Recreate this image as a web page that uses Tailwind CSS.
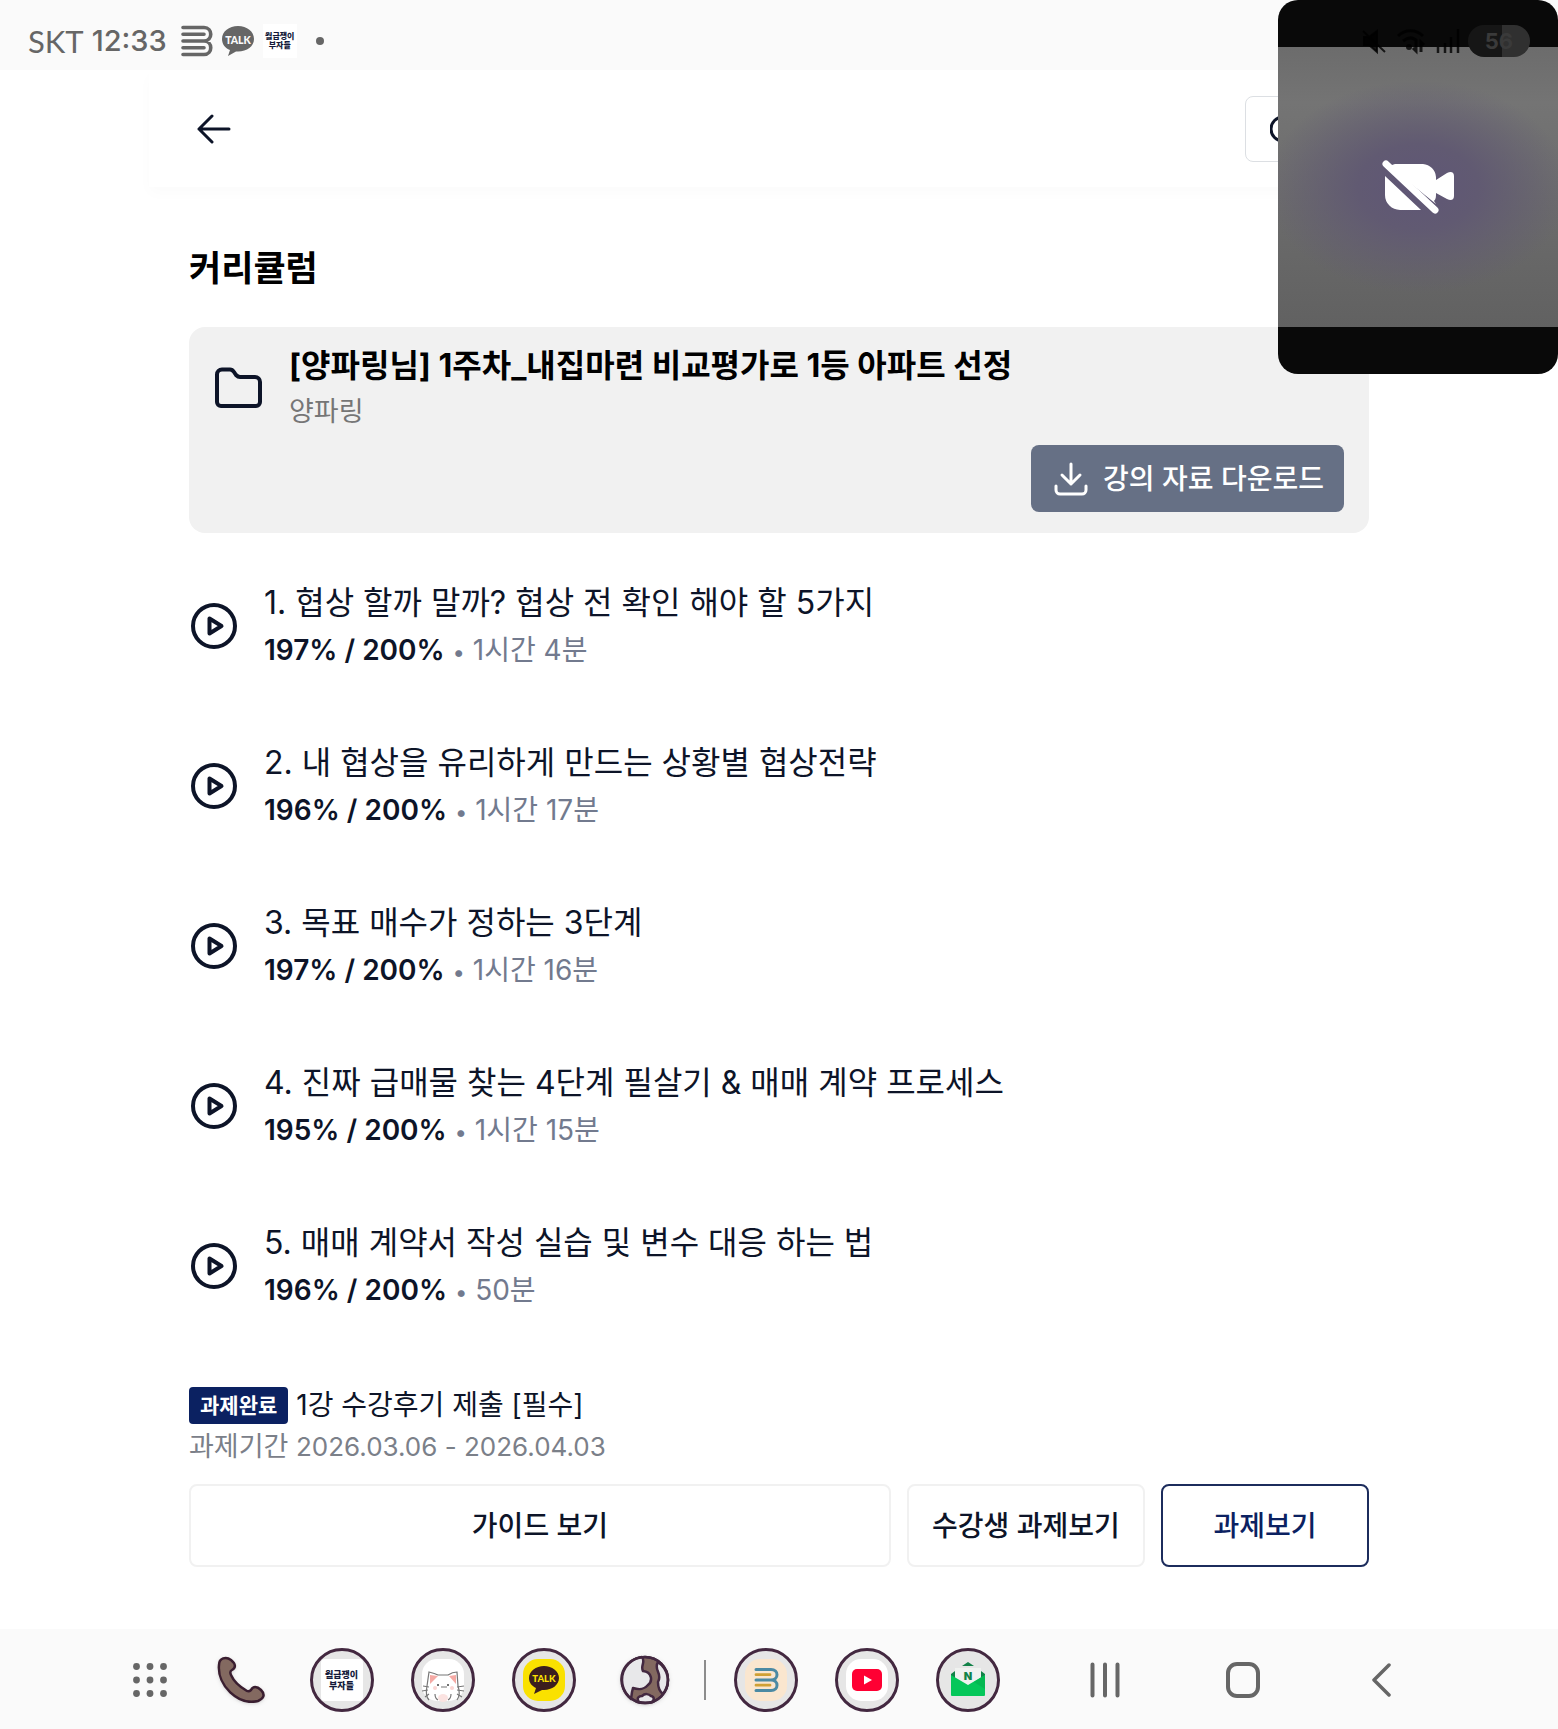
<!DOCTYPE html>
<html lang="ko">
<head>
    <meta charset="UTF-8">
    <meta name="viewport" content="width=device-width, initial-scale=1.0">
    <title>커리큘럼</title>
    <script src="https://cdn.jsdelivr.net/npm/@tailwindcss/browser@4"></script>
</head>
<body class="flex min-h-screen flex-col bg-white font-['Inter','Noto_Sans_CJK_KR',sans-serif] text-[#0d1428] antialiased">

    <!-- Status bar -->
    <div class="flex h-[70px] items-center justify-between bg-[#fafafa] pt-3 pr-7 pl-7 text-[#666]">
        <div class="flex items-center">
            <span class="font-['Lato',sans-serif] text-[31px] leading-8">SKT</span>
            <time class="ml-2 text-[29px] leading-8 font-medium">12:33</time>
            <svg class="ml-[14px] h-8 w-8" viewBox="0 0 32 32" fill="none" stroke="currentColor" stroke-width="3.6" stroke-linecap="round">
                <path d="M2 2.500h21c9 0 9 13.500 0 13.500c9 0 9 13.500 0 13.500H2M2 9.300h21M2 16h21M2 22.700h21"/>
            </svg>
            <svg class="ml-2 h-8 w-[34px]" viewBox="0 0 34 32">
                <path fill="currentColor" d="M17 1C8 1 1 6.500 1 14c0 5 3 9 8 11l-2 6 8-4.500h2c9 0 16-5 16-12.500S26 1 17 1z"/>
                <text x="17" y="18.500" text-anchor="middle" font-family="Lato" font-weight="900" font-size="10.500" fill="#fafafa">TALK</text>
            </svg>
            <div class="ml-2 flex h-[34px] w-[34px] flex-col justify-center bg-white text-center text-[8px] leading-[9px] font-black text-[#141a3a]">
                <span>월급쟁이</span><span>부자들</span>
            </div>
            <span class="ml-[19px] h-2 w-2 rounded-full bg-[#666]"></span>
        </div>
        <div class="relative z-20 flex items-center gap-2 text-black/80">
            <svg class="h-7 w-7" viewBox="0 0 28 28" fill="currentColor" stroke="currentColor" stroke-width="2">
                <path d="M4 10h5l8-6v21l-8-7H4zM3 4l22 21"/>
            </svg>
            <svg class="h-7 w-8" viewBox="0 0 32 28" fill="none" stroke="currentColor" stroke-width="3">
                <path d="M2 9c7-7 18-7 25 0M7 14c5-4 10-4 14 0M20 14v10l-3-3M25 25V15l3 3"/><circle cx="13" cy="20" r="1.500"/>
            </svg>
            <svg class="h-7 w-6" viewBox="0 0 24 28" fill="none" stroke="currentColor" stroke-width="2.500">
                <path d="M2 26v-6M9 26V16M15 26V10M22 26V2"/>
            </svg>
            <div class="flex h-8 w-[62px] items-center justify-center rounded-full bg-linear-to-r from-[#161616] from-55% to-[#303030] to-55% text-[22px] leading-none font-bold text-[#3a3a3a]">56</div>
        </div>
    </div>

    <!-- Header -->
    <header class="mx-auto flex h-[117px] w-full max-w-[1260px] items-center justify-between px-10 shadow-[0_6px_14px_rgba(0,0,0,0.02)]">
        <button type="button" aria-label="뒤로 가기" class="ml-2">
            <svg class="h-8 w-9" viewBox="0 0 36 32" fill="none" stroke="currentColor" stroke-width="3" stroke-linecap="round" stroke-linejoin="round">
                <path d="M32 16H2M15 3L2 16l13 13"/>
            </svg>
        </button>
        <button type="button" aria-label="검색" class="flex h-[66px] items-center rounded-lg border border-[#dcdfe3] px-6">
            <svg class="h-8 w-[74px]" viewBox="0 0 74 32" fill="none" stroke="currentColor" stroke-width="3" stroke-linecap="round">
                <circle cx="13" cy="16" r="12"/><path d="M22 25l6 6"/>
            </svg>
        </button>
    </header>

    <!-- Camera overlay -->
    <div class="absolute top-0 right-0 z-10 flex h-[374px] w-[280px] flex-col justify-center overflow-hidden rounded-[20px] bg-[#090909]">
        <div class="flex h-[280px] bg-linear-to-b from-[#6c6c6c] via-[#747474] via-20% to-[#616161]">
            <div class="flex h-full w-full items-center justify-center bg-[radial-gradient(ellipse_54%_38%_at_50%_50%,#5f5676_0%,#615a72_40%,transparent_100%)] pl-0.5">
                <svg class="h-14 w-[76px]" viewBox="0 0 76 56" fill="#fff">
                    <path d="M14 5h28a14 14 0 0 1 13 13v3l11-7c4-2 7-1 7 3v20c0 4-3 5-7 3l-11-6c0 4 0 6-2 8l2 3L8 7zM4 17l36 34H19A15 15 0 0 1 4 36z"/>
                    <path d="M5 5l49 46" stroke="#fff" stroke-width="7" stroke-linecap="round"/>
                </svg>
            </div>
        </div>
    </div>

    <main class="mx-auto w-full max-w-[1180px] pt-[57px] pb-[60px]">
        <h1 class="text-[35px] leading-[48px] font-bold text-black">커리큘럼</h1>

        <!-- Lecture card -->
        <section class="mt-[35px] flex flex-col rounded-2xl bg-[#f1f1f1] px-[25px] pt-4 pb-[21px]">
            <div class="flex items-center gap-[26px]">
                <svg class="h-12 w-[49px] shrink-0" viewBox="0 0 49 48" fill="none" stroke="currentColor" stroke-width="4" stroke-linejoin="round">
                    <path d="M3 9.500A5 5 0 0 1 8 4.500h8c2 0 3 1 4 2.500l2 3c1 1 2 2 4 2h15a5 5 0 0 1 5 5v20a4 4 0 0 1-4 4H7a4 4 0 0 1-4-4z"/>
                </svg>
                <div>
                    <h2 class="text-[32px] leading-[46px] font-bold text-black">[양파링님] 1주차_내집마련 비교평가로 1등 아파트 선정</h2>
                    <p class="text-[27px] leading-[46px] text-[#767676]">양파링</p>
                </div>
            </div>
            <button type="button" class="mt-[10px] flex h-[67px] items-center gap-3 self-end rounded-lg bg-[#667085] px-5 text-[28px] font-medium text-white">
                <svg class="h-9 w-10" viewBox="0 0 40 36" fill="none" stroke="currentColor" stroke-width="3" stroke-linecap="round" stroke-linejoin="round">
                    <path d="M20 3v20M11 14l9 9 9-9M5 25v4a4 4 0 0 0 4 4h22a4 4 0 0 0 4-4v-4"/>
                </svg>
                강의 자료 다운로드
            </button>
        </section>

        <!-- Lecture list -->
        <ol class="mt-[46px] flex flex-col gap-[66px]">
            <li>
                <a href="#" class="flex items-center gap-[27px]">
                    <svg class="h-12 w-12 shrink-0" viewBox="0 0 48 48" fill="none" stroke="currentColor" stroke-width="4" stroke-linejoin="round"><circle cx="25" cy="24" r="21"/><path d="M20.500 16.500v15l12-7.500z"/></svg>
                    <div>
                        <h3 class="text-[32px] leading-[48px]">1. 협상 할까 말까? 협상 전 확인 해야 할 5가지</h3>
                        <p class="text-[28px] leading-[46px] text-[#727a8e]"><strong class="font-semibold text-[#0d1428]">197% / 200%</strong> <span class="align-middle text-[22px] leading-none">•</span> 1시간 4분</p>
                    </div>
                </a>
            </li>
            <li>
                <a href="#" class="flex items-center gap-[27px]">
                    <svg class="h-12 w-12 shrink-0" viewBox="0 0 48 48" fill="none" stroke="currentColor" stroke-width="4" stroke-linejoin="round"><circle cx="25" cy="24" r="21"/><path d="M20.500 16.500v15l12-7.500z"/></svg>
                    <div>
                        <h3 class="text-[32px] leading-[48px]">2. 내 협상을 유리하게 만드는 상황별 협상전략</h3>
                        <p class="text-[28px] leading-[46px] text-[#727a8e]"><strong class="font-semibold text-[#0d1428]">196% / 200%</strong> <span class="align-middle text-[22px] leading-none">•</span> 1시간 17분</p>
                    </div>
                </a>
            </li>
            <li>
                <a href="#" class="flex items-center gap-[27px]">
                    <svg class="h-12 w-12 shrink-0" viewBox="0 0 48 48" fill="none" stroke="currentColor" stroke-width="4" stroke-linejoin="round"><circle cx="25" cy="24" r="21"/><path d="M20.500 16.500v15l12-7.500z"/></svg>
                    <div>
                        <h3 class="text-[32px] leading-[48px]">3. 목표 매수가 정하는 3단계</h3>
                        <p class="text-[28px] leading-[46px] text-[#727a8e]"><strong class="font-semibold text-[#0d1428]">197% / 200%</strong> <span class="align-middle text-[22px] leading-none">•</span> 1시간 16분</p>
                    </div>
                </a>
            </li>
            <li>
                <a href="#" class="flex items-center gap-[27px]">
                    <svg class="h-12 w-12 shrink-0" viewBox="0 0 48 48" fill="none" stroke="currentColor" stroke-width="4" stroke-linejoin="round"><circle cx="25" cy="24" r="21"/><path d="M20.500 16.500v15l12-7.500z"/></svg>
                    <div>
                        <h3 class="text-[32px] leading-[48px]">4. 진짜 급매물 찾는 4단계 필살기 &amp; 매매 계약 프로세스</h3>
                        <p class="text-[28px] leading-[46px] text-[#727a8e]"><strong class="font-semibold text-[#0d1428]">195% / 200%</strong> <span class="align-middle text-[22px] leading-none">•</span> 1시간 15분</p>
                    </div>
                </a>
            </li>
            <li>
                <a href="#" class="flex items-center gap-[27px]">
                    <svg class="h-12 w-12 shrink-0" viewBox="0 0 48 48" fill="none" stroke="currentColor" stroke-width="4" stroke-linejoin="round"><circle cx="25" cy="24" r="21"/><path d="M20.500 16.500v15l12-7.500z"/></svg>
                    <div>
                        <h3 class="text-[32px] leading-[48px]">5. 매매 계약서 작성 실습 및 변수 대응 하는 법</h3>
                        <p class="text-[28px] leading-[46px] text-[#727a8e]"><strong class="font-semibold text-[#0d1428]">196% / 200%</strong> <span class="align-middle text-[22px] leading-none">•</span> 50분</p>
                    </div>
                </a>
            </li>
        </ol>

        <!-- Assignment -->
        <section class="mt-[74px]">
            <div class="flex items-center gap-2">
                <span class="flex h-[37px] items-center rounded bg-[#0b2161] px-[11px] text-[21px] font-bold text-white">과제완료</span>
                <h3 class="text-[28px] leading-[37px]">1강 수강후기 제출 [필수]</h3>
            </div>
            <p class="text-[27px] leading-[46px] text-[#7b8089]">과제기간 <span class="text-[26px] leading-none">2026.03.06 - 2026.04.03</span></p>
            <div class="mt-[14px] flex gap-4 text-[28px] font-medium">
                <button type="button" class="h-[83px] flex-1 rounded-lg border-2 border-[#f1f1f1]">가이드 보기</button>
                <button type="button" class="h-[83px] w-[238px] rounded-lg border-2 border-[#f1f1f1]">수강생 과제보기</button>
                <button type="button" class="h-[83px] w-[208px] rounded-lg border-2 border-[#1c2c5c] text-[#0b2161]">과제보기</button>
            </div>
        </section>
    </main>

    <!-- Taskbar -->
    <nav class="mt-auto flex h-[100px] items-center justify-center bg-[#fafafa] pt-0.5 pl-0.5 text-[#666]">
        <button type="button" aria-label="앱" class="flex w-20 justify-center">
            <svg class="h-9 w-9" viewBox="0 0 36 36" fill="currentColor">
                <circle cx="4.500" cy="4.500" r="3.400"/><circle cx="18" cy="4.500" r="3.400"/><circle cx="31.500" cy="4.500" r="3.400"/>
                <circle cx="4.500" cy="18" r="3.400"/><circle cx="18" cy="18" r="3.400"/><circle cx="31.500" cy="18" r="3.400"/>
                <circle cx="4.500" cy="31.500" r="3.400"/><circle cx="18" cy="31.500" r="3.400"/><circle cx="31.500" cy="31.500" r="3.400"/>
            </svg>
        </button>
        <button type="button" aria-label="전화" class="flex w-[101px] justify-center">
            <svg class="h-[50px] w-[50px] drop-shadow" viewBox="0 0 50 50" fill="#836960" stroke="#3a1e30" stroke-width="2.500" stroke-linejoin="round">
                <path d="M3 10c0-7 7-9 12-5 5 4 5 8 1 10-2 1-2 3-1 5 3 7 9 12 16 16 2 1 3 0 4-1 2-4 6-4 10 0 5 5 2 9-3 11C22 51 1 30 3 10z"/>
            </svg>
        </button>
        <button type="button" aria-label="월급쟁이부자들" class="flex w-[101px] justify-center">
            <span class="flex h-16 w-16 items-center justify-center rounded-full border-3 border-[#432840] bg-[#e6e6e6]">
                <span class="flex h-[42px] w-[42px] flex-col justify-center rounded bg-white text-[9px] leading-[11px] font-black text-[#141a3a]"><span>월급쟁이</span><span>부자들</span></span>
            </span>
        </button>
        <button type="button" aria-label="고양이" class="flex w-[101px] justify-center">
            <svg class="h-16 w-16" viewBox="0 0 64 64" fill="none">
                <circle cx="32" cy="32" r="30.500" fill="#e6e6e6" stroke="#432840" stroke-width="3"/>
                <rect x="11" y="11" width="42" height="42" rx="15" fill="#fff"/>
                <path d="M19 27l8 1-8 8zM45 27l-7 1 7 8z" fill="#f5aaa5"/>
                <path d="M18 52c-3-3-3-9-2-14l2-14c4 1 7 2 9 3h10c3-2 6-3 9-3l1 14c2 6 2 10-1 14" fill="none" stroke="#777" stroke-width="1.200"/>
                <path d="M12 38l6 1M11 43l6-1M14 49l4-3M46 39l7-1M46 42l7 1M46 46l5 3M30 39h6M24 46c0 3 1 5 3 6M40 46c0 3-1 5-3 6" stroke="#777" stroke-width="1.200"/>
                <ellipse cx="32" cy="50" rx="5" ry="4" fill="#fbe3e1"/>
                <circle cx="27" cy="37" r="1" fill="#444"/><circle cx="37" cy="37" r="1" fill="#444"/><circle cx="24" cy="40" r="2" fill="#fbd5d3"/><circle cx="41" cy="40" r="2" fill="#fbd5d3"/>
            </svg>
        </button>
        <button type="button" aria-label="카카오톡" class="flex w-[101px] justify-center">
            <svg class="h-16 w-16" viewBox="0 0 64 64">
                <circle cx="32" cy="32" r="30.500" fill="#e6e6e6" stroke="#432840" stroke-width="3"/>
                <rect x="11" y="11" width="42" height="42" rx="15" fill="#fae100"/>
                <path d="M32 18c-8 0-15 5-15 12 0 5 3 8 7 10l-2 6 8-4h2c8 0 15-5 15-12s-7-12-15-12z" fill="#3b1e1e"/>
                <text x="32" y="34" text-anchor="middle" font-family="Lato" font-weight="900" font-size="9.500" fill="#fae100">TALK</text>
            </svg>
        </button>
        <button type="button" aria-label="인터넷" class="flex w-[101px] justify-center">
            <svg class="h-[50px] w-[50px] drop-shadow" viewBox="0 0 50 50" stroke="#432840" stroke-width="2.500" stroke-linejoin="round">
                <circle cx="25" cy="25" r="23" fill="#836960"/>
                <path d="M22 2c4 5-2 9 1 14 9 1 10 10 5 14-3 4-9 5-15 3l-1 4-1 7C-4 32-2 6 22 2z" fill="#e8e8ea"/>
                <path d="M38 7c-5 8 5 11 0 20 0 6 1 9 5 12 8-11 6-24-5-32zM19 47c-3-4 0-6 3-6 3-3 7-2 9 0 4 1 3 4 1 6-4 1-9 1-13 0z" fill="#e8e8ea"/>
                <circle cx="25" cy="25" r="23" fill="none"/>
            </svg>
        </button>
        <div class="flex w-5 justify-center"><span class="h-10 w-0.5 bg-[#8c8c8c]"></span></div>
        <button type="button" aria-label="밀리" class="flex w-[101px] justify-center">
            <svg class="h-16 w-16" viewBox="0 0 64 64" fill="none" stroke-linecap="round">
                <circle cx="32" cy="32" r="30.500" fill="#e6e6e6" stroke="#432840" stroke-width="3"/>
                <rect x="11" y="11" width="42" height="42" rx="15" fill="#fae6cf"/>
                <path d="M22 21.500h15c8 0 8 10.500 0 10.500c8 0 8 10.500 0 10.500H22M22 32h15" stroke="#4b8aa4" stroke-width="3"/>
                <path d="M22 26.700h14M22 37.200h14" stroke="#d0a034" stroke-width="2.800"/>
            </svg>
        </button>
        <button type="button" aria-label="유튜브" class="flex w-[101px] justify-center">
            <svg class="h-16 w-16" viewBox="0 0 64 64">
                <circle cx="32" cy="32" r="30.500" fill="#e6e6e6" stroke="#432840" stroke-width="3"/>
                <rect x="11" y="11" width="42" height="42" rx="15" fill="#fff"/>
                <rect x="17" y="21" width="30" height="22" rx="5" fill="#ff0033"/>
                <path d="M29 27.500v9l8-4.500z" fill="#fff"/>
            </svg>
        </button>
        <button type="button" aria-label="네이버 메일" class="flex w-[101px] justify-center">
            <svg class="h-16 w-16" viewBox="0 0 64 64">
                <circle cx="32" cy="32" r="30.500" fill="#e6e6e6" stroke="#432840" stroke-width="3"/>
                <path d="M32 14l6 4H26zM15 26l4-3v10h-4zM49 26l-4-3v10h4z" fill="#128248"/>
                <path d="M19 20h26v18H19z" fill="#f0f2f0"/>
                <path d="M15 27l17 10 17-10v20a1 1 0 0 1-1 1H16a1 1 0 0 1-1-1z" fill="#05c75a"/>
                <path d="M38 34l11 7v-14z" fill="#04b852"/>
                <text x="32" y="32" text-anchor="middle" font-family="Inter" font-weight="900" font-size="11" fill="#128248">N</text>
            </svg>
        </button>
        <button type="button" aria-label="최근 앱" class="ml-[18px] flex w-[138px] justify-center">
            <svg class="h-9 w-8" viewBox="0 0 32 36" stroke="currentColor" stroke-width="4" stroke-linecap="round"><path d="M3.500 2.500v31M16 2.500v31M28.500 2.500v31"/></svg>
        </button>
        <button type="button" aria-label="홈" class="flex w-[138px] justify-center">
            <svg class="h-9 w-9" viewBox="0 0 36 36" fill="none" stroke="currentColor" stroke-width="4"><rect x="3" y="2" width="30" height="32" rx="9"/></svg>
        </button>
        <button type="button" aria-label="뒤로" class="flex w-[138px] justify-center">
            <svg class="h-9 w-5" viewBox="0 0 20 36" fill="none" stroke="currentColor" stroke-width="3.500" stroke-linecap="round" stroke-linejoin="round"><path d="M18 3L3 18l15 15"/></svg>
        </button>
    </nav>
</body>
</html>
